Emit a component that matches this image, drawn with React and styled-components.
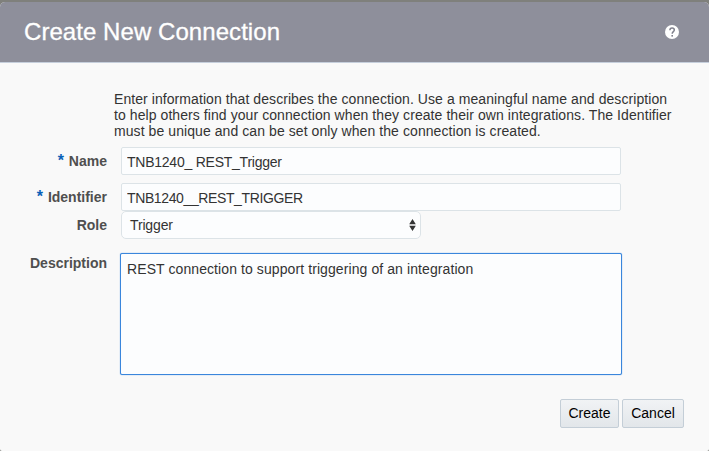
import React from "react";
import styled, { createGlobalStyle } from "styled-components";

const GlobalStyle = createGlobalStyle`
  *, *::before, *::after { box-sizing: border-box; }
  body {
    margin: 0;
    background: #7f807c;
    overflow: hidden;
    font-family: "Liberation Sans", Arial, sans-serif;
    font-size: 14px;
    color: #333;
  }
`;

const Backdrop = styled.main`
  height: 451px;
  padding-top: 2px;
  background: #7f807c;
`;

const Dialog = styled.section`
  height: 449px;
  display: flex;
  flex-direction: column;
  border-radius: 5px 5px 2px 2px;
  overflow: hidden;
  background: #f9f9f9;
`;

const Header = styled.header`
  height: 61px;
  flex: none;
  display: flex;
  align-items: center;
  justify-content: space-between;
  padding: 0 30px 0 24px;
  background: #8e8f9b;
  border-bottom: 1px solid #c6cfdc;
`;

const Title = styled.h1`
  margin: 0;
  font-size: 24px;
  line-height: 28px;
  font-weight: 400;
  color: #fff;
  letter-spacing: 0.06px;
  -webkit-text-stroke: 0.3px #fff;
`;

const HelpIcon = styled.svg`
  display: block;
  width: 14px;
  height: 14px;
`;

const Intro = styled.p`
  margin: 28px 0 8px 114px;
  line-height: 16px;
`;

const Line = styled.span`
  display: block;
  width: max-content;
  white-space: nowrap;
  letter-spacing: ${(p) => p.$track || 0}px;
`;

const Row = styled.div`
  display: grid;
  grid-template-columns: 107px 502px;
  column-gap: 13px;
  margin-bottom: ${(p) => p.$gap || 0}px;
`;

const Label = styled.label`
  padding-top: ${(p) => p.$top || 6}px;
  text-align: right;
  line-height: 16px;
  font-weight: 700;
  color: #4f4f4f;
`;

const Required = styled.span`
  color: #0a60b8;
  font-size: 16px;
  line-height: 10px;
  margin-right: 5px;
`;

const TextInput = styled.input`
  width: 500px;
  height: 28px;
  margin: 0 1px;
  padding: 2px 5px 0;
  border: 1px solid #dce3e7;
  border-radius: 2px;
  background: #fcfdfe;
  color: #333;
  font: inherit;
  letter-spacing: ${(p) => p.$track || 0}px;
  outline: none;
`;

const SelectBox = styled.div`
  width: 300px;
  height: 28px;
  margin: 0 1px;
  display: flex;
  align-items: center;
  justify-content: space-between;
  padding: 0 4px 0 8px;
  border: 1px solid #dce3e7;
  border-radius: 5px;
  background: #fcfdfe;
`;

const Arrows = styled.svg`
  display: block;
  width: 7px;
  height: 12px;
`;

const TextArea = styled.textarea`
  display: block;
  width: 502px;
  height: 122px;
  padding: 7px 6px;
  border: 1px solid #3a86dc;
  border-radius: 2px;
  box-shadow: 0 0 1px #3a86dc;
  background: #fcfdfe;
  color: #333;
  font: inherit;
  line-height: 16px;
  letter-spacing: ${(p) => p.$track || 0}px;
  resize: none;
  outline: none;
`;

const Actions = styled.footer`
  display: flex;
  justify-content: flex-end;
  gap: 3px;
  padding: 24px 25px 0 0;
`;

const Button = styled.button`
  width: ${(p) => p.$width}px;
  height: 29px;
  padding: 0 0 2px;
  border: 1px solid #c4ced7;
  border-radius: 2px;
  background: linear-gradient(#f1f3f5, #e2e6ea);
  color: #000;
  font: inherit;
  white-space: nowrap;
`;

export default function App() {
  return (
    <Backdrop>
      <GlobalStyle />
      <Dialog role="dialog" aria-labelledby="title">
        <Header>
          <Title id="title">Create New Connection</Title>
          <HelpIcon viewBox="0 0 14 14" role="img" aria-label="Help">
            <circle cx="7" cy="7" r="7" fill="#fff" />
            <path d="M4.9 5.2C4.9 3.8 5.8 3 7.1 3s2.2.8 2.2 2c0 1.6-2.1 1.7-2.1 3.8" fill="none" stroke="#80818d" strokeWidth="1.5" />
            <rect x="6.4" y="10" width="1.6" height="1.6" fill="#80818d" />
          </HelpIcon>
        </Header>
        <Intro>
          <Line $track={0.07}>Enter information that describes the connection. Use a meaningful name and description</Line>
          <Line $track={0.075}>to help others find your connection when they create their own integrations. The Identifier</Line>
          <Line $track={0.075}>must be unique and can be set only when the connection is created.</Line>
        </Intro>
        <Row $gap={8}>
          <Label htmlFor="name"><Required>*</Required>Name</Label>
          <TextInput id="name" $track={-0.24} defaultValue="TNB1240_ REST_Trigger" />
        </Row>
        <Row>
          <Label htmlFor="identifier"><Required>*</Required>Identifier</Label>
          <TextInput id="identifier" $track={-0.38} defaultValue="TNB1240__REST_TRIGGER" />
        </Row>
        <Row $gap={14}>
          <Label>Role</Label>
          <SelectBox role="combobox" aria-label="Role">
            <Line $track={-0.15}>Trigger</Line>
            <Arrows viewBox="0 0 7 12">
              <path d="M3.5 0 6.8 5.2H.2ZM3.5 12 .2 6.8h6.6Z" fill="#333" />
            </Arrows>
          </SelectBox>
        </Row>
        <Row>
          <Label htmlFor="description" $top={2}>Description</Label>
          <TextArea id="description" $track={0.09} defaultValue="REST connection to support triggering of an integration" />
        </Row>
        <Actions>
          <Button $width={59}>Create</Button>
          <Button $width={62}>Cancel</Button>
        </Actions>
      </Dialog>
    </Backdrop>
  );
}
